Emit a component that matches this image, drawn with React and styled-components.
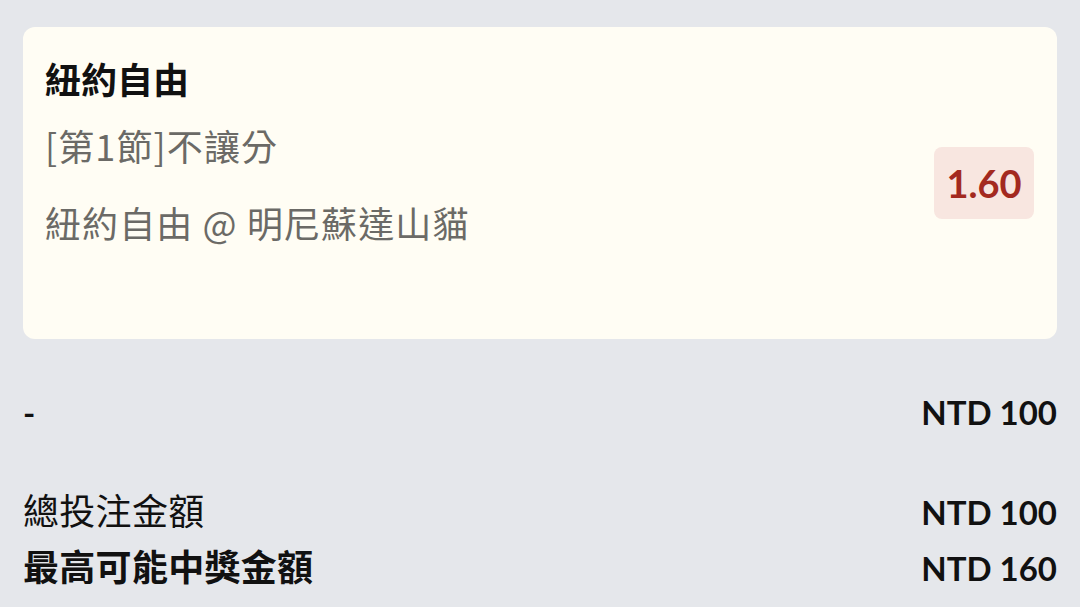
import styled, { createGlobalStyle } from "styled-components";

const GlobalStyle = createGlobalStyle`
  html, body {
    margin: 0;
    padding: 0;
    background: #e5e7eb;
  }
  body {
    font-family: "Lato", "Noto Sans CJK TC", sans-serif;
    color: #111111;
  }
`;

const bet = {
  team: "紐約自由",
  market: "[第1節]不讓分",
  match: "紐約自由 @ 明尼蘇達山貓",
  odds: "1.60",
};

const summary = [
  { label: "總投注金額", value: "NTD 100", strong: false },
  { label: "最高可能中獎金額", value: "NTD 160", strong: true },
];

const App = () => {
  return (
    <StPage>
      <GlobalStyle />
      <StCard>
        <StInfo>
          <StTeam>{bet.team}</StTeam>
          <StMarket>{bet.market}</StMarket>
          <StMatch>{bet.match}</StMatch>
        </StInfo>
        <StOdds>{bet.odds}</StOdds>
      </StCard>

      <StStakeRow>
        <StDash>-</StDash>
        <StAmount>NTD 100</StAmount>
      </StStakeRow>

      <StSummary>
        {summary.map(({ label, value, strong }) => (
          <StSummaryRow key={label}>
            <StLabel $strong={strong}>{label}</StLabel>
            <StAmount>{value}</StAmount>
          </StSummaryRow>
        ))}
      </StSummary>
    </StPage>
  );
};
export default App;

const StPage = styled.div`
  width: 1080px;
  height: 607px;
  box-sizing: border-box;
  padding: 27px 23px 0 23px;
  overflow: hidden;
`;

const StCard = styled.section`
  height: 312px;
  box-sizing: border-box;
  background: #fffdf4;
  border-radius: 12px;
  padding: 0 23px 0 22px;
  display: flex;
  align-items: center;
  justify-content: space-between;
`;

const StInfo = styled.div`
  align-self: flex-start;
  padding-top: 29px;
  display: flex;
  flex-direction: column;
`;

const StTeam = styled.h1`
  margin: 0;
  font-family: "Noto Sans CJK TC", sans-serif;
  font-weight: 700;
  font-size: 36px;
  line-height: 44px;
  color: #111111;
`;

const StMarket = styled.div`
  margin-top: 23px;
  font-family: "Noto Sans CJK TC", sans-serif;
  font-weight: 400;
  font-size: 36px;
  letter-spacing: 1.1px;
  line-height: 44px;
  color: #6b6a66;
`;

const StMatch = styled(StMarket)`
  margin-top: 33px;
`;

const StOdds = styled.div`
  width: 100px;
  height: 72px;
  box-sizing: border-box;
  border-radius: 8px;
  background: #f8e6e0;
  color: #a3291f;
  font-family: "Lato", sans-serif;
  font-weight: 700;
  font-size: 38px;
  display: flex;
  align-items: center;
  justify-content: center;
`;

const StStakeRow = styled.div`
  margin-top: 51px;
  display: flex;
  align-items: baseline;
  justify-content: space-between;
  height: 44px;
`;

const StDash = styled.span`
  font-family: "Lato", sans-serif;
  font-weight: 700;
  font-size: 33px;
`;

const StAmount = styled.span`
  font-family: "Lato", sans-serif;
  font-weight: 700;
  font-size: 33px;
  line-height: 44px;
  color: #111111;
`;

const StSummary = styled.div`
  margin-top: 53px;
  display: flex;
  flex-direction: column;
  gap: 12px;
`;

const StSummaryRow = styled.div`
  display: flex;
  align-items: baseline;
  justify-content: space-between;
  height: 44px;
`;

const StLabel = styled.span`
  font-family: "Noto Sans CJK TC", sans-serif;
  font-weight: ${({ $strong }) => ($strong ? 700 : 400)};
  font-size: 36px;
  letter-spacing: 0.3px;
  line-height: 44px;
  color: #111111;
`;
